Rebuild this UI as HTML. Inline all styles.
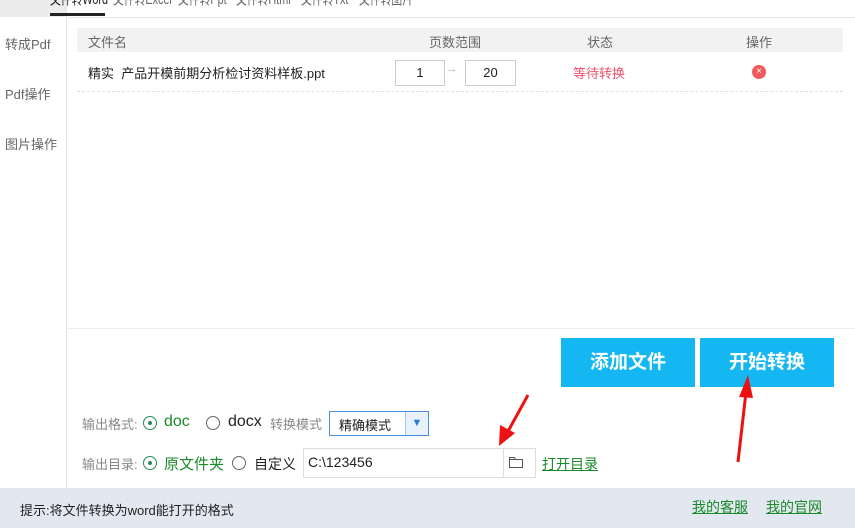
<!DOCTYPE html>
<html><head><meta charset="utf-8"><style>
body{margin:0;width:855px;height:528px;position:relative;overflow:hidden;background:#fff;font-family:"Liberation Sans","Noto Sans CJK SC",sans-serif;font-size:13px;color:#222}
.a{position:absolute;white-space:nowrap}
.t{top:-12px;font-size:15px;color:#666;transform:scaleX(0.72);transform-origin:0 0}
</style></head><body>
<div class="a" style="left:0;top:0;width:66px;height:17px;background:#ececec"></div>
<div class="a" style="left:66px;top:0;width:1px;height:488px;background:#e6e6e6"></div>
<div class="a" style="left:67px;top:17px;width:788px;height:1px;background:#e8e8e8"></div>
<div class="a" style="left:5px;top:34px;color:#666">转成Pdf</div>
<div class="a" style="left:5px;top:84px;color:#666">Pdf操作</div>
<div class="a" style="left:5px;top:134px;color:#666">图片操作</div>
<div class="a t" style="left:50px;color:#222">文件转Word</div>
<div class="a t" style="left:113px">文件转Excel</div>
<div class="a t" style="left:178px">文件转Ppt</div>
<div class="a t" style="left:236px">文件转Html</div>
<div class="a t" style="left:301px">文件转Txt</div>
<div class="a t" style="left:359px">文件转图片</div>
<div class="a" style="left:50px;top:13px;width:55px;height:3px;background:#222"></div>
<div class="a" style="left:77px;top:28px;width:766px;height:24px;background:#f2f2f2"></div>
<div class="a" style="left:88px;top:32px;color:#666">文件名</div>
<div class="a" style="left:429px;top:32px;color:#666">页数范围</div>
<div class="a" style="left:587px;top:32px;color:#666">状态</div>
<div class="a" style="left:746px;top:32px;color:#666">操作</div>
<div class="a" style="left:88px;top:63px">精实&nbsp; 产品开模前期分析检讨资料样板.ppt</div>
<div class="a" style="left:395px;top:60px;width:48px;height:24px;border:1px solid #ccc;text-align:center;line-height:24px">1</div>
<div class="a" style="left:446px;top:63px;color:#aaa;font-size:11px">→</div>
<div class="a" style="left:465px;top:60px;width:49px;height:24px;border:1px solid #ccc;text-align:center;line-height:24px">20</div>
<div class="a" style="left:573px;top:63px;color:#f0506e">等待转换</div>
<div class="a" style="left:752px;top:65px;width:14px;height:14px;border-radius:50%;background:#f05a5a;color:#fff;font-size:10px;text-align:center;line-height:14px">×</div>
<div class="a" style="left:77px;top:91px;width:766px;border-top:1px dashed #e0e0e0"></div>
<div class="a" style="left:67px;top:328px;width:788px;height:1px;background:#eee"></div>
<div class="a" style="left:561px;top:338px;width:134px;height:49px;background:#14b7f2;color:#fff;font-size:19px;font-weight:bold;text-align:center;line-height:49px">添加文件</div>
<div class="a" style="left:700px;top:338px;width:134px;height:49px;background:#14b7f2;color:#fff;font-size:19px;font-weight:bold;text-align:center;line-height:49px">开始转换</div>
<div class="a" style="left:82px;top:414px;color:#888">输出格式:</div>
<div class="a" style="left:143px;top:416px;width:12px;height:12px;border:1px solid #2a8a5a;border-radius:50%"></div>
<div class="a" style="left:148px;top:421px;width:4px;height:4px;background:#2a8a5a;border-radius:50%"></div>
<div class="a" style="left:164px;top:413px;font-size:16px;color:#1a8a2a">doc</div>
<div class="a" style="left:206px;top:416px;width:12px;height:12px;border:1px solid #666;border-radius:50%"></div>
<div class="a" style="left:228px;top:413px;font-size:16px">docx</div>
<div class="a" style="left:270px;top:414px;color:#888">转换模式</div>
<div class="a" style="left:329px;top:411px;width:98px;height:23px;border:1px solid #4a90d9"></div>
<div class="a" style="left:339px;top:415px">精确模式</div>
<div class="a" style="left:405px;top:412px;width:22px;height:23px;background:#e8f2fc;border-left:1px solid #aac8ea;color:#2a7ad9;font-size:11px;text-align:center;line-height:23px">▼</div>
<div class="a" style="left:82px;top:454px;color:#888">输出目录:</div>
<div class="a" style="left:143px;top:456px;width:12px;height:12px;border:1px solid #2a8a5a;border-radius:50%"></div>
<div class="a" style="left:148px;top:461px;width:4px;height:4px;background:#2a8a5a;border-radius:50%"></div>
<div class="a" style="left:164px;top:453px;font-size:15px;color:#1a8a2a">原文件夹</div>
<div class="a" style="left:232px;top:456px;width:12px;height:12px;border:1px solid #666;border-radius:50%"></div>
<div class="a" style="left:254px;top:454px;font-size:14px">自定义</div>
<div class="a" style="left:303px;top:448px;width:231px;height:28px;border:1px solid #ddd"></div>
<div class="a" style="left:308px;top:454px;font-size:14px">C:\123456</div>
<div class="a" style="left:503px;top:448px;width:1px;height:30px;background:#ddd"></div>
<svg class="a" style="left:508px;top:455px" width="16" height="14"><path d="M1.5 2.5h5l1 2h7v8h-13z M1.5 4.5h13" fill="none" stroke="#555"/></svg>
<div class="a" style="left:542px;top:454px;font-size:14px;color:#1a8a2a;text-decoration:underline">打开目录</div>
<div class="a" style="left:0;top:488px;width:855px;height:40px;background:#e3e7ef"></div>
<div class="a" style="left:20px;top:500px">提示:将文件转换为word能打开的格式</div>
<div class="a" style="left:692px;top:497px;font-size:14px;color:#1a8a2a;text-decoration:underline">我的客服</div>
<div class="a" style="left:766px;top:497px;font-size:14px;color:#1a8a2a;text-decoration:underline">我的官网</div>
<svg class="a" style="left:0;top:0" width="855" height="528">
<line x1="528" y1="395" x2="506" y2="435" stroke="#e11" stroke-width="3"/>
<polygon points="499,446 500,425 515,433" fill="#e11"/>
<line x1="738" y1="462" x2="746" y2="392" stroke="#e11" stroke-width="3"/>
<polygon points="748,375 739,397 753,398" fill="#e11"/>
</svg>
</body></html>
